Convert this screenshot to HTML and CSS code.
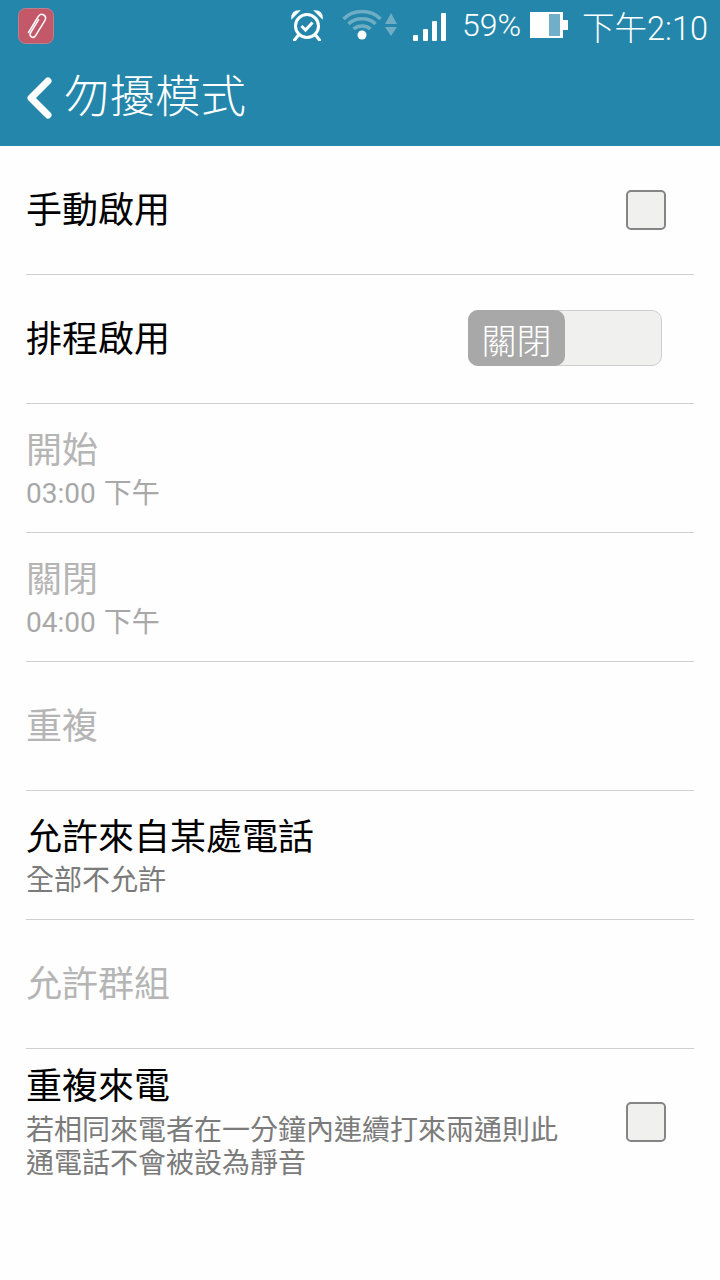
FILE: index.html
```html
<!DOCTYPE html>
<html lang="zh-Hant">
<head>
<meta charset="utf-8">
<title>勿擾模式</title>
<link rel="stylesheet" href="styles.css">
</head>
<body>
<div class="screen">
  <header class="appbar">
    <div class="status">
      <div class="notif">
        <svg width="36" height="36" viewBox="0 0 36 36"><rect x="0.5" y="0.5" width="35" height="35" rx="7" fill="#c25868" stroke="#b9818f"/><path d="M10.5 24.5 L20 8.8 C21.5 6.4 24 5.9 25.8 7 C27.7 8.2 28 10.6 26.7 12.8 L17.6 27.6 C16.6 29.2 14.8 29.7 13.4 28.9 C12 28 11.8 26.2 12.7 24.7 L20.6 11.6" fill="none" stroke="#fff" stroke-width="1.5" stroke-linecap="round"/></svg>
      </div>
      <div class="status-right">
        <svg class="ic-alarm" width="34" height="32" viewBox="0 0 34 32"><circle cx="17" cy="17" r="11.5" fill="none" stroke="#fff" stroke-width="3"/><path d="M11.5 17 L15.5 21 L22.5 13.5" fill="none" stroke="#fff" stroke-width="3"/><path d="M2 9 C2 4 5 2 9 2 Z M32 9 C32 4 29 2 25 2 Z" fill="#fff" stroke="#fff" stroke-width="1.5"/><path d="M8.5 26 L4.5 31 M25.5 26 L29.5 31" stroke="#fff" stroke-width="3" stroke-linecap="round"/></svg>
        <svg class="ic-wifi" width="56" height="34" viewBox="0 0 56 34"><g fill="none" stroke="#6fadc4" stroke-width="3.6"><path d="M1.500 11 C11 1 29 1 38.500 11"/><path d="M6.500 16 C13 9 27 9 33.500 16"/><path d="M11.500 21 C16 17 24 17 28.500 21"/></g><circle cx="20" cy="27" r="4.500" fill="#fff"/><path d="M43 16 L49 5 L55 16 Z M43 19 L55 19 L49 28 Z" fill="#6fadc4"/></svg>
        <svg class="ic-signal" width="34" height="30" viewBox="0 0 34 30"><rect x="1" y="23" width="5" height="6" rx="1" fill="#fff"/><rect x="11" y="17" width="5" height="12" rx="1" fill="#fff"/><rect x="20" y="9" width="5" height="20" rx="1" fill="#fff"/><rect x="29" y="1" width="5" height="28" rx="1" fill="#fff"/></svg>
        <span class="pct">59%</span>
        <svg class="ic-batt" width="38" height="26" viewBox="0 0 38 26"><rect x="0" y="0" width="33" height="26" fill="#70afc7"/><rect x="0" y="0" width="19" height="26" fill="#fff"/><path d="M30 0 H33 V26 H30 Z M19 0 H33 V2 H19 Z M19 24 H33 V26 H19 Z" fill="#fff"/><rect x="33" y="8" width="5" height="10" fill="#fff"/></svg>
        <span class="clock">下午2:10</span>
      </div>
    </div>
    <div class="titlebar">
      <svg class="back" width="26" height="42" viewBox="0 0 26 42"><path d="M22 4 L5 21 L22 38" fill="none" stroke="#fff" stroke-width="7" stroke-linecap="round" stroke-linejoin="round"/></svg>
      <h1 class="title">勿擾模式</h1>
    </div>
  </header>
  <main class="list">
    <div class="row">
      <div class="text"><div class="label">手動啟用</div></div>
      <span class="check"></span>
    </div>
    <div class="row">
      <div class="text"><div class="label">排程啟用</div></div>
      <div class="switch"><span class="thumb">關閉</span></div>
    </div>
    <div class="row off">
      <div class="text"><div class="label">開始</div><div class="sub">03:00 下午</div></div>
    </div>
    <div class="row off">
      <div class="text"><div class="label">關閉</div><div class="sub">04:00 下午</div></div>
    </div>
    <div class="row off">
      <div class="text"><div class="label">重複</div></div>
    </div>
    <div class="row">
      <div class="text"><div class="label">允許來自某處電話</div><div class="sub">全部不允許</div></div>
    </div>
    <div class="row off">
      <div class="text"><div class="label">允許群組</div></div>
    </div>
    <div class="row last">
      <div class="text"><div class="label">重複來電</div><div class="sub long">若相同來電者在一分鐘內連續打來兩通則此<br>通電話不會被設為靜音</div></div>
      <span class="check"></span>
    </div>
  </main>
</div>
</body>
</html>
```
FILE: styles.css
```css
* { box-sizing: border-box; }
html, body { margin: 0; padding: 0; }
body {
  width: 720px;
  height: 1280px;
  overflow: hidden;
  background: #fefefe;
  font-family: Roboto, "Noto Sans CJK TC", sans-serif;
}
.screen { display: flex; flex-direction: column; height: 1280px; }
.appbar { background: #2386aa; height: 146px; color: #fff; }
.status {
  height: 50px;
  display: flex;
  align-items: center;
  justify-content: space-between;
  padding: 0 12px 0 18px;
}
.notif { display: flex; margin-top: 1px; }
.status-right { display: flex; align-items: center; }
.ic-alarm { margin-right: 18px; }
.ic-wifi { margin-right: 14px; }
.ic-signal { margin-right: 16px; margin-top: 4px; }
.pct { font-size: 32px; font-weight: 300; margin-right: 9px; }
.ic-batt { margin-right: 14px; }
.clock { font-size: 32.5px; font-weight: 300; }
.titlebar {
  height: 96px;
  display: flex;
  align-items: center;
  padding-left: 26px;
}
.back { margin-right: 12px; }
.title { margin: 0; font-size: 45.500px; font-weight: 300; line-height: 1; }
.list { padding: 0 26px; display: flex; flex-direction: column; }
.row {
  height: 129px;
  display: flex;
  align-items: center;
  justify-content: space-between;
  border-bottom: 1px solid #cfcfcf;
}
.row.last { height: 145px; border-bottom: 0; }
.text { flex: 1; min-width: 0; padding-top: 2px; }
.label { font-size: 36px; line-height: 44px; color: #000; }
.sub { font-size: 28px; line-height: 36px; color: #7b7b7b; margin-top: 3px; margin-bottom: -3px; word-spacing: 1px; }
.sub.long { line-height: 33px; margin-top: 5px; margin-bottom: 0; }
.off .label { color: #b5b5b5; }
.off .sub { color: #a8a8a8; }
.check {
  width: 40px;
  height: 40px;
  margin-right: 28px;
  background: #f0f0ee;
  border: 2px solid #858585;
  border-radius: 5px;
}
.switch {
  width: 194px;
  height: 56px;
  margin-right: 32px;
  margin-bottom: 2px;
  background: #f0f0ee;
  border: 1px solid #cfcfcf;
  border-radius: 10px;
  display: flex;
}
.thumb {
  width: 97px;
  margin: -1px 0 -1px -1px;
  background: #a8a8a8;
  border-radius: 10px;
  color: #fff;
  font-size: 35px;
  font-weight: 300;
  display: flex;
  align-items: center;
  justify-content: center;
}
```
